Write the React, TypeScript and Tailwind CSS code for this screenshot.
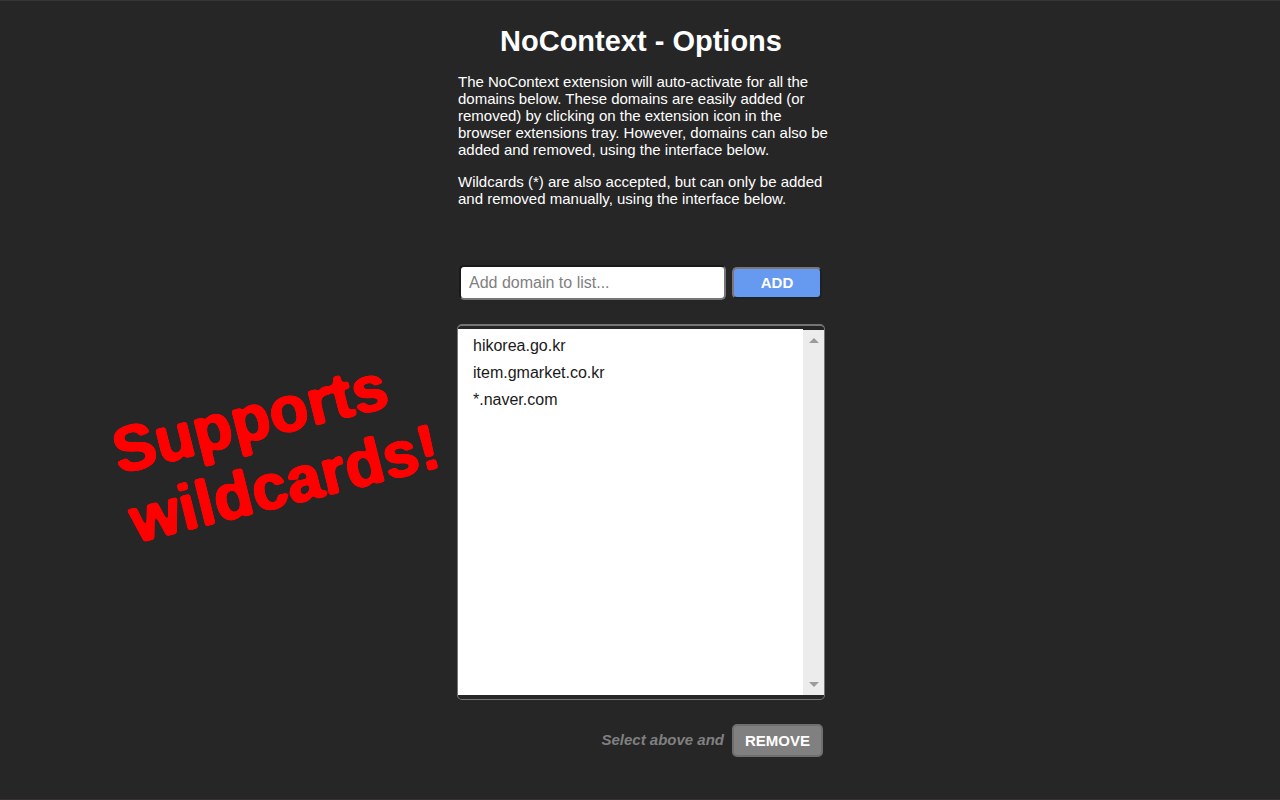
import { useState } from "react";

const initialDomains = ["hikorea.go.kr", "item.gmarket.co.kr", "*.naver.com"];

function Slogan() {
  return (
    <svg
      viewBox="0 0 350 200"
      className="h-[200px] w-[350px] shrink-0 overflow-visible"
      role="img"
      aria-label="Supports wildcards!"
    >
      <defs>
        {/* Softens the glyph corners, then restores a crisp edge */}
        <filter id="rounded" x="-10%" y="-20%" width="120%" height="140%" colorInterpolationFilters="sRGB">
          <feGaussianBlur stdDeviation="1.6" />
          <feComponentTransfer>
            <feFuncA type="linear" slope="6" intercept="-2.6" />
          </feComponentTransfer>
          <feComponentTransfer>
            <feFuncR type="linear" slope="0" intercept="1" />
            <feFuncG type="linear" slope="0" intercept="0" />
            <feFuncB type="linear" slope="0" intercept="0" />
          </feComponentTransfer>
        </filter>
      </defs>
      <g filter="url(#rounded)">
        <g
          transform="translate(20 119) rotate(-14)"
          fill="#ff0000"
          stroke="#ff0000"
          strokeWidth="2"
          strokeLinejoin="round"
          fontFamily="'Liberation Sans', Arial, sans-serif"
          fontWeight="700"
          fontSize="64"
        >
          <text x="0" y="0">Supports</text>
          <text x="0" y="71">wildcards!</text>
        </g>
      </g>
    </svg>
  );
}

function ScrollTrack() {
  return (
    <div
      aria-hidden="true"
      className="mt-px flex w-[21px] flex-col items-center justify-between bg-[#ececec] py-2"
    >
      <svg viewBox="0 0 10 5" className="h-[5px] w-[10px]">
        <path d="M0 5 5 0l5 5z" fill="#9b9b9f" />
      </svg>
      <svg viewBox="0 0 10 5" className="h-[5px] w-[10px]">
        <path d="M0 0h10L5 5z" fill="#9b9b9f" />
      </svg>
    </div>
  );
}

export default function App() {
  const [domains, setDomains] = useState(initialDomains);
  const [draft, setDraft] = useState("");
  const [selected, setSelected] = useState<string[]>([]);

  const add = () => {
    const value = draft.trim();
    if (value && !domains.includes(value)) setDomains([...domains, value]);
    setDraft("");
  };

  const remove = () => {
    setDomains(domains.filter((d) => !selected.includes(d)));
    setSelected([]);
  };

  return (
    <div className="grid min-h-screen grid-cols-[1fr_368px_1fr] border-y border-t-[#363636] border-b-[#363033] bg-[#262626] pl-[2px] font-['Liberation_Sans',Arial,sans-serif] text-white">
      <aside className="flex justify-end pt-[354px] pr-2">
        <Slogan />
      </aside>

      <main className="pt-6">
        <h1 className="text-center text-[29px] leading-8 font-bold">NoContext - Options</h1>

        <div className="mt-4 space-y-[15px] px-px text-[15px] leading-[17px] whitespace-nowrap">
          <p>
            The NoContext extension will auto-activate for all the
            <br />
            domains below. These domains are easily added (or
            <br />
            removed) by clicking on the extension icon in the
            <br />
            browser extensions tray. However, domains can also be
            <br />
            added and removed, using the interface below.
          </p>
          <p>
            Wildcards (*) are also accepted, but can only be added
            <br />
            and removed manually, using the interface below.
          </p>
        </div>

        <form
          className="mt-[58px] flex items-center gap-[6px] pr-[3px] pl-[2px]"
          onSubmit={(e) => {
            e.preventDefault();
            add();
          }}
        >
          <input
            type="text"
            aria-label="Add domain to list"
            placeholder="Add domain to list..."
            value={draft}
            onChange={(e) => setDraft(e.target.value)}
            className="h-[35px] min-w-0 flex-1 rounded-[5px] border-2 border-t-[#1a1a1a] border-r-[#767676] border-b-[#767676] border-l-[#1a1a1a] bg-white px-2 text-[16px] text-black outline-none placeholder:text-[#808080]"
          />
          <button
            type="submit"
            className="h-8 w-[90px] rounded-[5px] border-2 border-t-[#7d7576] border-r-[#1e2226] border-b-[#1e2226] border-l-[#7d7576] bg-[#6699f0] text-[15px] leading-4 font-bold"
          >
            ADD
          </button>
        </form>

        <div className="mt-6 flex h-[376px] rounded-[5px] border border-t-2 border-[#757575] pt-[3px] pb-1">
          <select
            multiple
            aria-label="Domains"
            value={selected}
            onChange={(e) => setSelected(Array.from(e.target.selectedOptions, (o) => o.value))}
            className="min-w-0 flex-1 bg-white px-[5px] py-[5px] text-[16px] text-[#1a1a1a] outline-none [scrollbar-width:none]"
          >
            {domains.map((d) => (
              <option key={d} value={d} className="h-[27px] px-[10px] py-[3px] leading-[21px]">
                {d}
              </option>
            ))}
          </select>
          <ScrollTrack />
        </div>

        <div className="mt-6 flex items-center justify-end gap-2 pr-[2px]">
          <span className="text-[15px] font-bold text-[#808080] italic">Select above and</span>
          <button
            type="button"
            onClick={remove}
            className="h-[33px] w-[91px] rounded-[5px] border-2 border-[#6f6f6f] bg-[#808080] text-[15px] leading-4 font-bold"
          >
            REMOVE
          </button>
        </div>
      </main>
    </div>
  );
}
